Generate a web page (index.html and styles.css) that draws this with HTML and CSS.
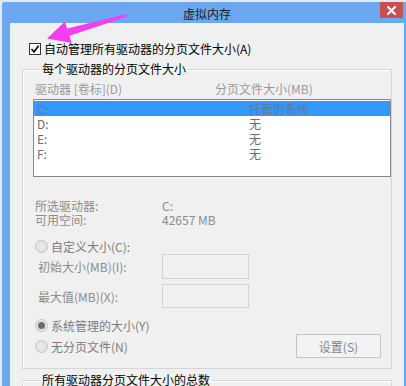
FILE: index.html
```html
<!DOCTYPE html>
<html lang="zh-CN">
<head>
<meta charset="utf-8">
<title>虚拟内存</title>
<link rel="stylesheet" href="styles.css">
</head>
<body>
<div class="window">
  <div class="titlebar">
    <span class="spacer"></span>
    <div class="title">虚拟内存</div>
    <div class="close">
      <svg width="9" height="9" viewBox="0 0 9 9"><path d="M1 1 L8 8 M8 1 L1 8" stroke="#fff" stroke-width="2" stroke-linecap="square"/></svg>
    </div>
  </div>
  <div class="content">
    <div class="check-row">
      <span class="checkbox"><svg width="10" height="10" viewBox="0 0 10 10"><path d="M1.5 5 L4 7.8 L8.7 1.8" fill="none" stroke="#111" stroke-width="1.8"/></svg></span>
      <span class="check-label">自动管理所有驱动器的分页文件大小(A)</span>
    </div>
    <fieldset class="group">
      <legend>每个驱动器的分页文件大小</legend>
      <div class="list-head"><span class="col1">驱动器 [卷标](D)</span><span>分页文件大小(MB)</span></div>
      <div class="listbox">
        <div class="lrow sel"><span class="c1">C:</span><span>托管的系统</span></div>
        <div class="lrow"><span class="c1">D:</span><span>无</span></div>
        <div class="lrow"><span class="c1">E:</span><span>无</span></div>
        <div class="lrow"><span class="c1">F:</span><span>无</span></div>
      </div>
      <div class="info">
        <div class="irow"><span class="ilabel">所选驱动器:</span><span>C:</span></div>
        <div class="irow"><span class="ilabel">可用空间:</span><span>42657 MB</span></div>
      </div>
      <div class="radio-row r-custom"><span class="radio"></span><span>自定义大小(C):</span></div>
      <div class="field-row f-first"><span class="flabel">初始大小(MB)(I):</span><span class="input"></span></div>
      <div class="field-row f-second"><span class="flabel">最大值(MB)(X):</span><span class="input"></span></div>
      <div class="radio-row r-system"><span class="radio on"></span><span>系统管理的大小(Y)</span></div>
      <div class="radio-row r-none"><span class="radio"></span><span class="grow">无分页文件(N)</span><span class="button">设置(S)</span></div>
    </fieldset>
    <fieldset class="group group2">
      <legend>所有驱动器分页文件大小的总数</legend>
      <div class="filler"></div>
    </fieldset>
  </div>
  <svg class="arrow" width="140" height="60" viewBox="0 0 140 60">
    <polygon points="47,38.5 65,21.5 67.1,28.6 127,14 127.6,16.6 69.5,35.8 71.6,43" fill="#f23ff0"/>
  </svg>
</div>
</body>
</html>
```

FILE: styles.css
```css
* { box-sizing: border-box; }
html, body {
  margin: 0;
  padding: 0;
  width: 406px;
  height: 386px;
  overflow: hidden;
  background: #e3e9f0;
  font-family: "Noto Sans CJK SC", "Microsoft YaHei", sans-serif;
  font-size: 12px;
}
.window {
  position: relative;
  margin: 2px 0 0 2px;
  width: 404px;
  height: 400px;
  background: #6aa8f3;
  border-radius: 2px 0 0 0;
  display: flex;
  flex-direction: column;
}
.titlebar {
  height: 24px;
  display: grid;
  grid-template-columns: 1fr auto 1fr;
  align-items: start;
}
.title {
  margin-top: 3px;
  padding-left: 6px;
  line-height: 18px;
  font-size: 12px;
  color: #1a1a1a;
}
.close {
  justify-self: end;
  width: 23px;
  height: 16px;
  margin-right: 3px;
  background: #c75150;
  display: flex;
  align-items: center;
  justify-content: center;
}
.close svg { display: block; }
.content {
  flex: 1;
  margin: 0 2px 0 8px;
  background: #f0f0f0;
  padding: 18px 12px 0 12px;
  color: #000;
}
.check-row {
  height: 16px;
  display: flex;
  align-items: center;
  padding-left: 7px;
  line-height: 16px;
}
.checkbox {
  width: 12px;
  height: 12px;
  border: 1px solid #333;
  background: #fff;
  display: flex;
  align-items: center;
  justify-content: center;
  margin-right: 3px;
}
.checkbox svg { display: block; }
.group {
  margin: 4px 0 0 0;
  padding: 0 0 10px 10px;
  border: 1px solid #d5d5d5;
  box-shadow: inset 1px 1px 0 #fff;
  min-width: 0;
}
.group legend {
  padding: 0 2px;
  margin-left: 7px;
  line-height: 16px;
  color: #000;
}
.list-head {
  margin-top: 4px;
  height: 16px;
  line-height: 16px;
  padding-left: 2px;
  display: flex;
  color: #9a9a9a;
}
.col1 { width: 180px; }
.listbox {
  margin-top: 2px;
  height: 78px;
  border: 1px solid #828790;
  background: #fff;
  padding-top: 1px;
}
.lrow {
  height: 15px;
  line-height: 15px;
  padding-left: 3px;
  display: flex;
  color: #6d6d6d;
}
.lrow.sel {
  background: #3399ff;
  color: #5f7896;
}
.c1 { width: 212px; }
.info {
  margin-top: 22px;
  padding-left: 2px;
  color: #8c8c8c;
}
.irow {
  height: 14px;
  line-height: 14px;
  display: flex;
}
.ilabel { width: 127px; }
.radio-row {
  display: flex;
  align-items: center;
  padding-left: 2px;
  color: #7d7d7d;
  line-height: 15px;
}
.r-custom { height: 15px; margin-top: 12px; }
.r-system { height: 15px; margin-top: 10px; }
.r-none { height: 24px; margin-top: 1px; padding-right: 10px; }
.radio {
  width: 13px;
  height: 13px;
  border-radius: 50%;
  border: 1px solid #c4c4c4;
  background: radial-gradient(circle, #eaeaea 0, #dedede 100%);
  margin-right: 3px;
  flex: none;
  display: flex;
  align-items: center;
  justify-content: center;
}
.radio.on::after {
  content: "";
  width: 7px;
  height: 7px;
  border-radius: 50%;
  background: #6a6a6a;
}
.grow { flex: 1; }
.field-row {
  display: flex;
  align-items: center;
  height: 25px;
  padding-left: 5px;
  color: #8c8c8c;
}
.f-second { margin-top: 5px; height: 24px; }
.flabel { width: 124px; }
.input {
  width: 87px;
  height: 100%;
  border: 1px solid #d4d4d4;
  background: #f0f0f0;
}
.button {
  width: 85px;
  height: 24px;
  border: 1px solid #c6c6c6;
  background: #f3f3f3;
  color: #858585;
  display: flex;
  align-items: center;
  justify-content: center;
}
.group2 { margin-top: 3px; }
.filler { height: 40px; }
.arrow {
  position: absolute;
  left: -2px;
  top: -2px;
}
```
